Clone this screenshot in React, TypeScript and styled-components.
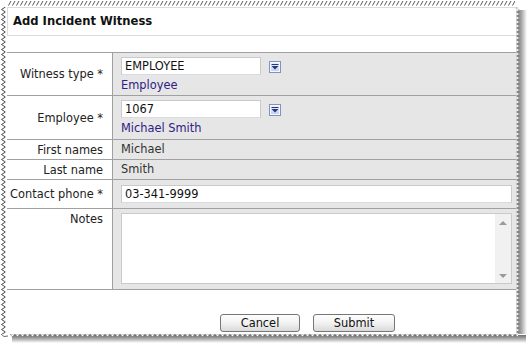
import React from 'react';
import styled, { createGlobalStyle } from 'styled-components';

const GlobalStyle = createGlobalStyle`
  html, body {
    margin: 0;
    padding: 0;
    background: #fff;
  }
  body {
    width: 528px;
    height: 344px;
    overflow: hidden;
    font-family: "DejaVu Sans", Verdana, sans-serif;
    font-size: 11.4px;
    color: #222;
  }
`;

const Sheet = styled.div`
  display: grid;
  grid-template-columns: 7px 509px 12px;
  grid-template-rows: 7px 327px 10px;
  width: 528px;
  height: 344px;
  background: #fff;
`;

const EdgeTop = styled.svg`
  grid-column: 1 / 3;
  grid-row: 1;
  display: block;
`;

const EdgeLeft = styled.svg`
  grid-column: 1;
  grid-row: 2;
  display: block;
`;

const EdgeRight = styled.svg`
  grid-column: 3;
  grid-row: 1 / 3;
  display: block;
`;

const EdgeBottom = styled.svg`
  grid-column: 1 / 4;
  grid-row: 3;
  display: block;
`;

const Content = styled.div`
  grid-column: 2;
  grid-row: 2;
  display: flex;
  flex-direction: column;
  overflow: hidden;
`;

const TitleBox = styled.div`
  height: 27px;
  line-height: 27px;
  padding-left: 5px;
  border-top: 1px solid #dcdcdc;
  border-left: 1px solid #dcdcdc;
  border-bottom: 1px solid #dcdcdc;
  font-size: 11.6px;
  font-weight: bold;
  color: #111;
`;

const Table = styled.div`
  margin-top: 16px;
  border-top: 1px solid #a0a0a0;
`;

const Row = styled.div`
  display: grid;
  grid-template-columns: 105px 1fr;
  border-bottom: 1px solid #a0a0a0;
`;

const Label = styled.div<{ $top?: boolean }>`
  align-self: ${p => (p.$top ? 'start' : 'center')};
  padding: ${p => (p.$top ? '3px 9px 0 0' : '0 9px 0 0')};
  text-align: right;
  color: #222;
  white-space: nowrap;
`;

const Value = styled.div<{ $pad?: string }>`
  background: #e6e6e6;
  border-left: 1px solid #a0a0a0;
  padding: ${p => p.$pad || '0 4px 0 8px'};
  min-height: 19px;
  line-height: 19px;
  color: #333;
`;

const PickerLine = styled.div`
  display: flex;
  align-items: center;
  gap: 7px;
  line-height: normal;
`;

const TextInput = styled.input<{ $w?: number }>`
  box-sizing: border-box;
  width: ${p => (p.$w ? `${p.$w}px` : '100%')};
  height: 18px;
  padding: 0 3px;
  border: 1px solid #cacaca;
  border-bottom-color: #d8dbe4;
  background: #fff;
  font-family: inherit;
  font-size: 11.4px;
  color: #111;
  outline: none;
`;

const DropButton = styled.button`
  box-sizing: border-box;
  width: 12px;
  height: 12px;
  padding: 0;
  margin: 2px 0 0 1px;
  border: 1px solid #8193bd;
  background: linear-gradient(#eef4ff, #bcd0f2);
  box-shadow: inset 0 0 0 1px #f4f8ff;
  display: flex;
  align-items: center;
  justify-content: center;
`;

const SubText = styled.div`
  margin-top: 2px;
  line-height: 16px;
  color: #2f2185;
`;

const NotesBox = styled.div`
  display: flex;
  height: 71px;
  box-sizing: border-box;
  border: 1px solid #cacaca;
  background: #fff;
`;

const NotesArea = styled.textarea`
  flex: 1;
  border: none;
  resize: none;
  outline: none;
  padding: 2px 3px;
  font-family: inherit;
  font-size: 11.4px;
`;

const ScrollTrack = styled.div`
  width: 16px;
  background: #f1f1f1;
  display: flex;
  flex-direction: column;
  justify-content: space-between;
  align-items: center;
  padding: 7px 0 5px;
`;

const Arrow = styled.span<{ $down?: boolean }>`
  width: 0;
  height: 0;
  border-left: 4px solid transparent;
  border-right: 4px solid transparent;
  ${p =>
    p.$down
      ? 'border-top: 4px solid #9a9a9a;'
      : 'border-bottom: 4px solid #9a9a9a;'}
`;

const Footer = styled.div`
  display: flex;
  gap: 13px;
  padding: 24px 0 0 213px;
`;

const Button = styled.button<{ $w: number }>`
  width: ${p => p.$w}px;
  height: 18px;
  padding: 0;
  border: 1px solid #767676;
  border-radius: 3px;
  background: linear-gradient(#fefefe, #f2f2f2 50%, #d9d9d9);
  font-family: inherit;
  font-size: 11.4px;
  color: #111;
`;

function DropIcon() {
  return (
    <svg width="8" height="6" viewBox="0 0 8 6">
      <rect x="0.5" y="0" width="7" height="1" fill="#2d3577" />
      <path d="M0.5 2 H7.5 L4 5.5 Z" fill="#2d3577" />
    </svg>
  );
}

function Picker({ value, caption }: { value: string; caption: string }) {
  return (
    <>
      <PickerLine>
        <TextInput $w={140} defaultValue={value} />
        <DropButton aria-label="pick">
          <DropIcon />
        </DropButton>
      </PickerLine>
      <SubText>{caption}</SubText>
    </>
  );
}

export default function App() {
  return (
    <>
      <GlobalStyle />
      <Sheet>
        <EdgeTop width="516" height="7">
          <defs>
            <pattern id="hatch" width="4" height="7" patternUnits="userSpaceOnUse">
              <path d="M0.5 5.5 L3 1" stroke="#444" strokeWidth="0.9" fill="none" />
            </pattern>
          </defs>
          <rect x="8" width="507" height="7" fill="url(#hatch)" />
        </EdgeTop>

        <EdgeLeft width="7" height="327">
          <defs>
            <pattern id="zigL" width="7" height="5" patternUnits="userSpaceOnUse">
              <path d="M5.5 0 L1.5 2.5 L5.5 5" stroke="#333" strokeWidth="0.9" fill="none" />
            </pattern>
          </defs>
          <rect width="7" height="327" fill="url(#zigL)" />
        </EdgeLeft>

        <EdgeRight width="12" height="334">
          <defs>
            <linearGradient id="shadowR" x1="0" x2="1" y1="0" y2="0">
              <stop offset="0" stopColor="#6e6e6e" />
              <stop offset="0.45" stopColor="#a8a8a8" />
              <stop offset="1" stopColor="#ffffff" />
            </linearGradient>
            <pattern id="zigR" width="12" height="4" patternUnits="userSpaceOnUse">
              <path d="M0 0 L3.5 2 L0 4 Z" fill="#fff" stroke="#8a8a8a" strokeWidth="0.5" />
            </pattern>
          </defs>
          <rect x="1" y="10" width="10" height="324" fill="url(#shadowR)" />
          <rect y="7" width="12" height="327" fill="url(#zigR)" />
        </EdgeRight>

        <Content>
          <TitleBox>Add Incident Witness</TitleBox>
          <Table>
            <Row>
              <Label>Witness type *</Label>
              <Value $pad="4px 4px 2px 8px">
                <Picker value="EMPLOYEE" caption="Employee" />
              </Value>
            </Row>
            <Row>
              <Label>Employee *</Label>
              <Value $pad="4px 4px 3px 8px">
                <Picker value="1067" caption="Michael Smith" />
              </Value>
            </Row>
            <Row>
              <Label>First names</Label>
              <Value>Michael</Value>
            </Row>
            <Row>
              <Label>Last name</Label>
              <Value>Smith</Value>
            </Row>
            <Row>
              <Label>Contact phone *</Label>
              <Value $pad="5px 4px 4px 8px">
                <TextInput defaultValue="03-341-9999" />
              </Value>
            </Row>
            <Row>
              <Label $top>Notes</Label>
              <Value $pad="4px 4px 5px 8px">
                <NotesBox>
                  <NotesArea />
                  <ScrollTrack>
                    <Arrow />
                    <Arrow $down />
                  </ScrollTrack>
                </NotesBox>
              </Value>
            </Row>
          </Table>
          <Footer>
            <Button $w={80}>Cancel</Button>
            <Button $w={82}>Submit</Button>
          </Footer>
        </Content>

        <EdgeBottom width="528" height="10">
          <defs>
            <linearGradient id="shadowB" x1="0" x2="0" y1="0" y2="1">
              <stop offset="0" stopColor="#6e6e6e" />
              <stop offset="0.45" stopColor="#a8a8a8" />
              <stop offset="1" stopColor="#ffffff" />
            </linearGradient>
            <pattern id="zigB" width="5" height="10" patternUnits="userSpaceOnUse">
              <path d="M0 0 L2.5 3 L5 0 Z" fill="#fff" stroke="#555" strokeWidth="0.5" />
            </pattern>
          </defs>
          <rect x="12" y="1" width="514" height="8" fill="url(#shadowB)" />
          <rect x="10" width="508" height="10" fill="url(#zigB)" />
          <path d="M1 0 L4 2.5 L8 2" stroke="#444" strokeWidth="0.8" fill="none" />
        </EdgeBottom>
      </Sheet>
    </>
  );
}
